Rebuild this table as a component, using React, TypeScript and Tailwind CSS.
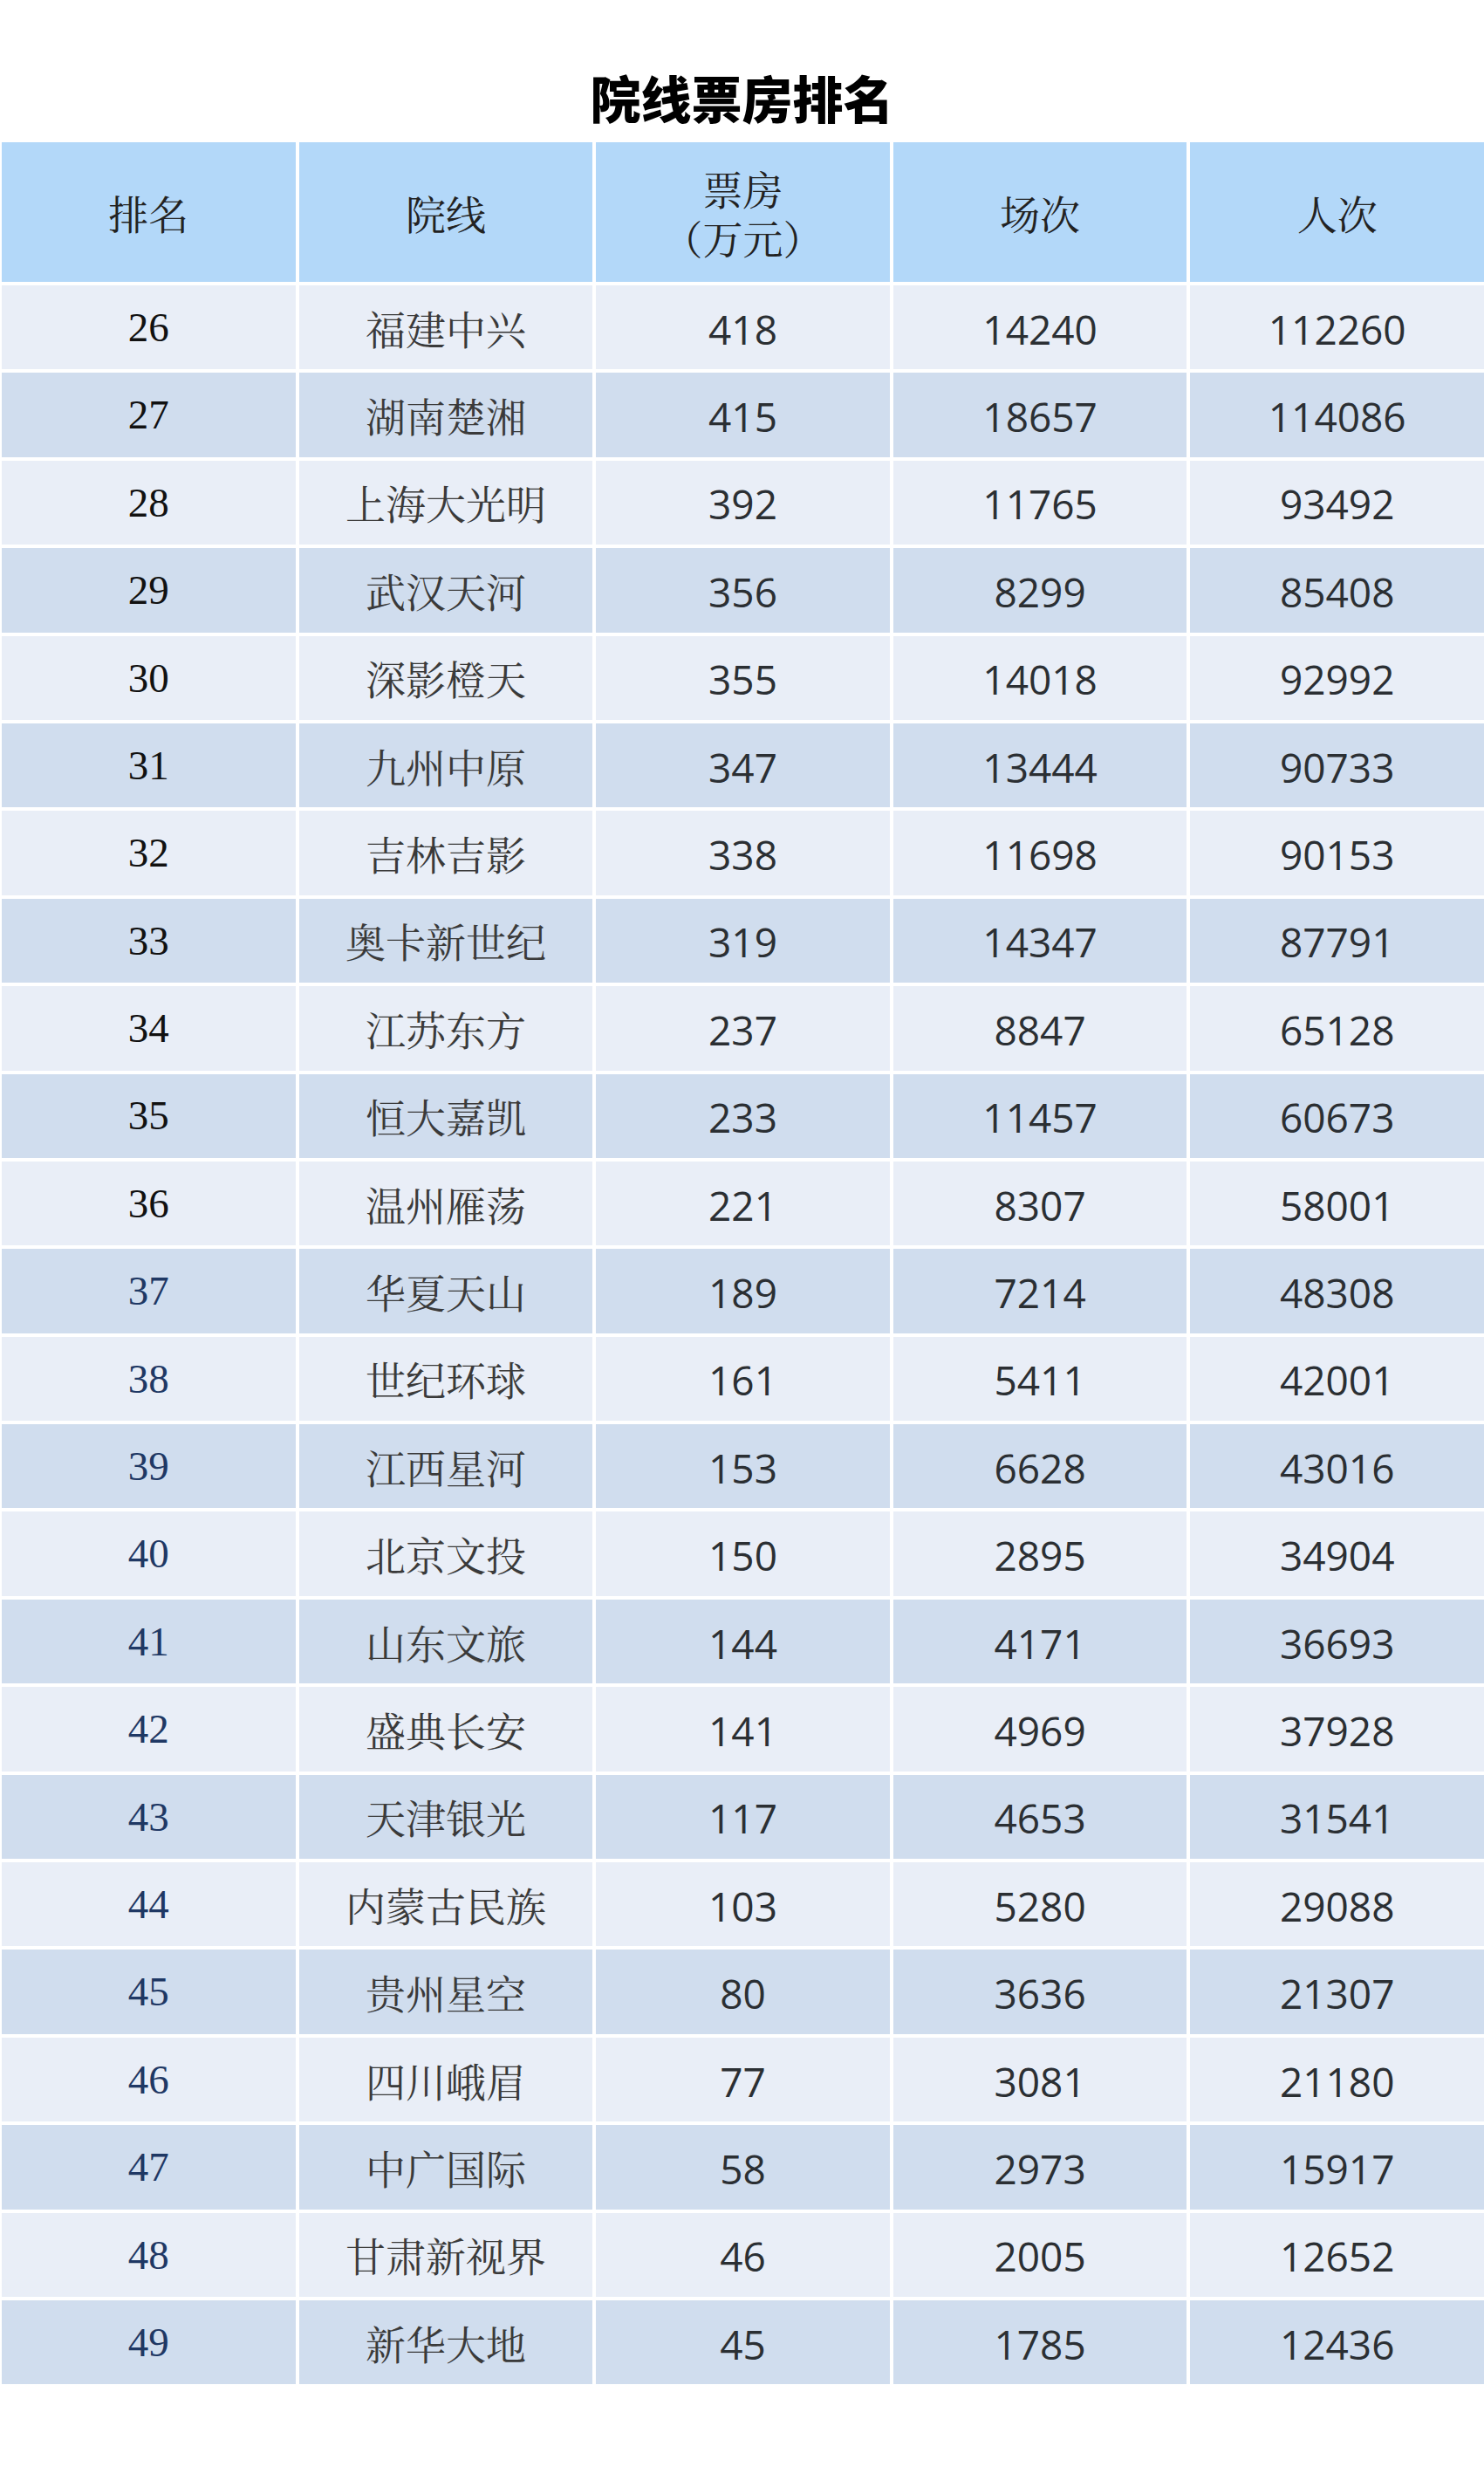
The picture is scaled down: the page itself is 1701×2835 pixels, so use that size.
const rows: [number, string, string, string, string][] = [
  [26, "福建中兴", "418", "14240", "112260"],
  [27, "湖南楚湘", "415", "18657", "114086"],
  [28, "上海大光明", "392", "11765", "93492"],
  [29, "武汉天河", "356", "8299", "85408"],
  [30, "深影橙天", "355", "14018", "92992"],
  [31, "九州中原", "347", "13444", "90733"],
  [32, "吉林吉影", "338", "11698", "90153"],
  [33, "奥卡新世纪", "319", "14347", "87791"],
  [34, "江苏东方", "237", "8847", "65128"],
  [35, "恒大嘉凯", "233", "11457", "60673"],
  [36, "温州雁荡", "221", "8307", "58001"],
  [37, "华夏天山", "189", "7214", "48308"],
  [38, "世纪环球", "161", "5411", "42001"],
  [39, "江西星河", "153", "6628", "43016"],
  [40, "北京文投", "150", "2895", "34904"],
  [41, "山东文旅", "144", "4171", "36693"],
  [42, "盛典长安", "141", "4969", "37928"],
  [43, "天津银光", "117", "4653", "31541"],
  [44, "内蒙古民族", "103", "5280", "29088"],
  [45, "贵州星空", "80", "3636", "21307"],
  [46, "四川峨眉", "77", "3081", "21180"],
  [47, "中广国际", "58", "2973", "15917"],
  [48, "甘肃新视界", "46", "2005", "12652"],
  [49, "新华大地", "45", "1785", "12436"],
];

const serif =
  "font-['Noto_Serif_CJK_SC','Liberation_Serif','Noto_Sans_CJK_SC',serif]";
const sans = "font-['Open_Sans','Noto_Sans_CJK_SC',sans-serif]";

const App = () => {
  return (
    <div className="w-full bg-white pb-[103px]">
      {/* Title */}
      <div className="h-[163px] pt-[58px] flex items-center justify-center">
        <h1 className="text-[58px] leading-none font-black text-black font-['Noto_Sans_CJK_SC',sans-serif]">
          院线票房排名
        </h1>
      </div>

      <div className="pl-[2px] grid grid-cols-5 gap-[4px]">
        {/* Header */}
        {["排名", "院线"].map((h) => (
          <div
            key={h}
            className={`h-[160px] bg-[#b3d8f9] flex items-center justify-center text-[46px] text-[#222] ${serif}`}
          >
            {h}
          </div>
        ))}
        <div
          className={`h-[160px] bg-[#b3d8f9] flex flex-col items-center justify-center text-[46px] leading-[56px] text-[#222] ${serif}`}
        >
          <span>票房</span>
          <span>（万元）</span>
        </div>
        {["场次", "人次"].map((h) => (
          <div
            key={h}
            className={`h-[160px] bg-[#b3d8f9] flex items-center justify-center text-[46px] text-[#222] ${serif}`}
          >
            {h}
          </div>
        ))}

        {/* Rows */}
        {rows.map(([rank, name, box, shows, people], i) => {
          const bg = i % 2 === 0 ? "bg-[#e9eef7]" : "bg-[#d0ddee]";
          const cell = `h-[96.4px] ${bg} flex items-center justify-center`;
          return [
            <div
              key={`${rank}-r`}
              className={`${cell} text-[47px] font-['Liberation_Serif',serif] ${
                rank >= 37 ? "text-[#1f3864]" : "text-[#111]"
              }`}
            >
              {rank}
            </div>,
            <div
              key={`${rank}-n`}
              className={`${cell} text-[46px] text-[#3a3a3a] ${serif}`}
            >
              {name}
            </div>,
            <div key={`${rank}-b`} className={`${cell} text-[46px] text-[#2b2f33] ${sans}`}>
              <span className="pt-[4px]">{box}</span>
            </div>,
            <div key={`${rank}-s`} className={`${cell} text-[46px] text-[#2b2f33] ${sans}`}>
              <span className="pt-[4px]">{shows}</span>
            </div>,
            <div key={`${rank}-p`} className={`${cell} text-[46px] text-[#2b2f33] ${sans}`}>
              <span className="pt-[4px]">{people}</span>
            </div>,
          ];
        })}
      </div>
    </div>
  );
};

export default App;
